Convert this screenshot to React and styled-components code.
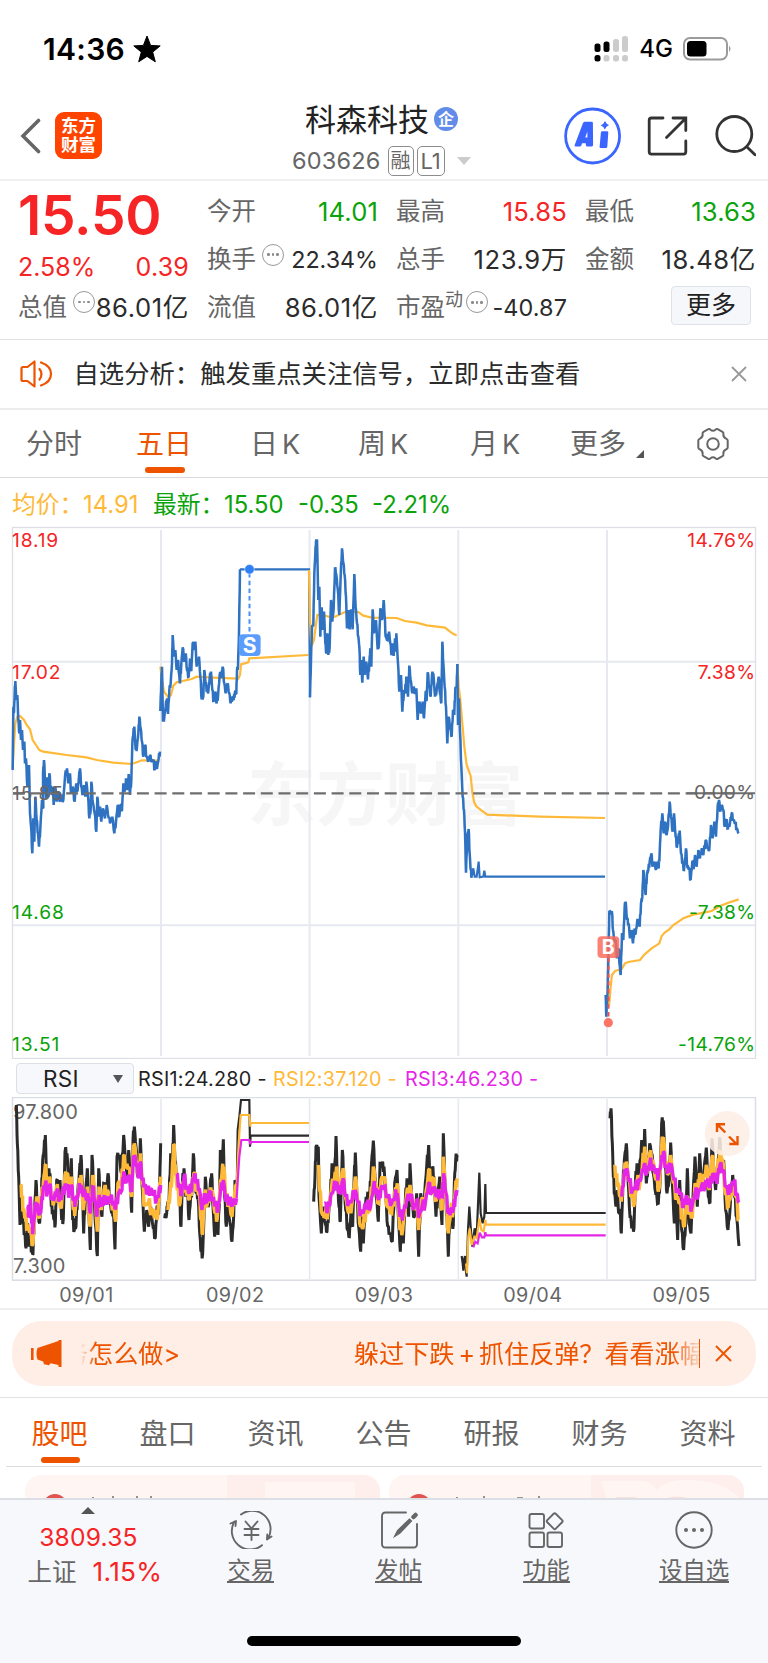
import React from "react";
import styled, { createGlobalStyle, css } from "styled-components";

const C = {
  red: "#f62424",
  green: "#0aa30a",
  orange: "#ee5400",
  amber: "#ffb938",
  magenta: "#e526e8",
  blue: "#2f72c2",
  ink: "#2b2b2b",
  grey: "#666666",
  grid: "#e6e9f0",
};

const GlobalStyle = createGlobalStyle`
  *, *::before, *::after { box-sizing: border-box; }
  body { margin: 0; background: #fff; }
`;

const num = css`
  font-family: Inter, "Noto Sans CJK SC", sans-serif;
`;

const Screen = styled.main`
  width: 768px;
  height: 1663px;
  overflow: hidden;
  display: flex;
  flex-direction: column;
  background: #fff;
  color: ${C.ink};
  ${num}
  svg { display: block; flex: none; }
`;

const Label = styled.span`
  display: block;
  white-space: nowrap;
  flex: none;
  color: ${(p) => p.$c || "inherit"};
  font-size: ${(p) => p.$s}px;
  font-weight: ${(p) => p.$w || 400};
  letter-spacing: ${(p) => p.$ls || 0}px;
  line-height: ${(p) => p.$lh || 30}px;
`;

/* ---------- status bar ---------- */
const StatusBar = styled.div`
  height: 98px;
  padding: 0 36px 0 43px;
  display: flex;
  align-items: center;
  color: #000;
`;
const StatusGroup = styled.div`
  display: flex;
  align-items: center;
  gap: ${(p) => p.$gap}px;
`;
const Grow = styled.div`
  flex: 1;
`;

/* ---------- header ---------- */
const Header = styled.header`
  height: 83px;
  padding: 0 12px 0 20px;
  display: flex;
  align-items: flex-start;
  border-bottom: 2px solid #efeff1;
`;
const Back = styled.div`
  padding-top: 20px;
  width: 35px;
`;
const Logo = styled.div`
  margin-top: 14px;
  width: 47px;
  height: 47px;
  border-radius: 9px;
  background: #ff4400;
  color: #fff;
  display: flex;
  flex-direction: column;
  align-items: center;
  justify-content: center;
`;
const TitleBlock = styled.div`
  margin-left: 190px;
  width: 190px;
`;
const TitleRow = styled.div`
  display: flex;
  align-items: center;
  height: 44px;
  padding-left: 13px;
`;
const CorpBadge = styled.span`
  margin: 0 0 1px 5px;
  width: 24px;
  height: 24px;
  border-radius: 50%;
  background: #628cea;
  color: #fff;
  display: flex;
  align-items: center;
  justify-content: center;
`;
const CodeRow = styled.div`
  display: flex;
  align-items: center;
  height: 38px;
`;
const Tag = styled.span`
  height: 30px;
  width: ${(p) => p.$w}px;
  margin-left: ${(p) => p.$ml}px;
  border: 1.5px solid #8c8c8c;
  border-radius: 5px;
  color: ${C.grey};
  display: flex;
  align-items: center;
  justify-content: center;
`;
const Caret = styled.i`
  margin-left: 12px;
  border: 7px solid transparent;
  border-top: 8px solid #ccc;
  border-bottom: 0;
`;
const HeaderIcons = styled.div`
  flex: 1;
  display: flex;
  justify-content: flex-end;
  padding-top: 9px;
`;

/* ---------- quote ---------- */
const Quote = styled.section`
  height: 159px;
  padding: 0 12px 0 18px;
  display: grid;
  grid-template-columns: repeat(4, 171px);
  column-gap: 18px;
  border-bottom: 1px solid #e2e2e2;
`;
const QuoteCol = styled.div`
  display: flex;
  flex-direction: column;
  padding-top: 6.5px;
`;
const Pair = styled.div`
  height: ${(p) => p.$h || 47.8}px;
  display: flex;
  justify-content: space-between;
  align-items: flex-start;
`;
const Name = styled.span`
  display: flex;
  align-items: flex-start;
`;
const BigPrice = styled.div`
  height: 62px;
  padding-top: 1px;
  font-size: 55px;
  font-weight: 600;
  line-height: 55px;
  letter-spacing: -0.2px;
  color: ${C.red};
`;
const Info = styled.i`
  width: 22px;
  height: 22px;
  margin: 8.5px 0 0 ${(p) => p.$ml}px;
  border: 1.7px solid #999;
  border-radius: 50%;
  display: flex;
  align-items: center;
  justify-content: center;
  gap: 2px;
  &::before, &::after, b { content: ""; width: 2.6px; height: 2.6px; border-radius: 50%; background: #8a8a8a; }
`;
const MoreButton = styled.button`
  ${num}
  align-self: flex-end;
  width: 80px;
  height: 39px;
  margin: 3px 5px 0 0;
  padding: 0;
  border: 1.5px solid #dfe2e8;
  border-radius: 4px;
  background: #f6f7fa;
  color: #222;
  font-size: 25px;
  line-height: 35px;
`;

/* ---------- notice ---------- */
const Notice = styled.section`
  height: 70px;
  padding: 0 21px 0 20px;
  display: flex;
  align-items: center;
  border-bottom: 2px solid #ededef;
`;
const NoticeText = styled(Label)`
  margin-left: 20.5px;
`;

/* ---------- period tabs ---------- */
const PeriodTabs = styled.nav`
  height: 69px;
  display: flex;
  border-bottom: 1.5px solid #dadade;
`;
const Period = styled.div`
  width: ${(p) => p.$w}px;
  padding: 15px 0 0 ${(p) => p.$pl || 0}px;
  color: ${(p) => (p.$on ? C.orange : C.grey)};
  &::after {
    content: "";
    display: ${(p) => (p.$on ? "block" : "none")};
    width: 40px;
    height: 6px;
    margin: 4px 0 0 9px;
    border-radius: 3px;
    background: ${C.orange};
  }
`;
const PeriodRow = styled.div`
  display: flex;
`;
const Corner = styled.i`
  height: 8px;
  margin: 25px 0 0 10px;
  border-left: 8px solid transparent;
  border-bottom: 8px solid #555;
`;
const KLetter = styled.span`
  margin-left: 4px;
  font-size: 27px;
`;

/* ---------- charts ---------- */
const Legend = styled.div`
  height: 48px;
  padding: 10.5px 0 0 12px;
  display: flex;
`;
const LegendItem = styled.span`
  width: ${(p) => p.$w}px;
  color: ${(p) => p.$c};
  font-size: 23.8px;
  line-height: 32px;
  white-space: nowrap;
`;
const PriceChart = styled.svg`
  width: 768px;
  height: 533px;
`;
const RsiBar = styled.div`
  height: 38px;
  padding: 1px 0 0 16px;
  display: flex;
  align-items: center;
`;
const Picker = styled.div`
  width: 118px;
  height: 31px;
  margin-right: 4px;
  padding-left: 26px;
  display: flex;
  align-items: center;
  border: 1.5px solid #dcdfe6;
  border-radius: 4px;
  background: #f7f8fb;
  color: #222;
`;
const PickerCaret = styled.i`
  margin-left: 34px;
  border: 5px solid transparent;
  border-top: 8px solid #555;
  border-bottom: 0;
`;
const RsiItem = styled(LegendItem)`
  font-size: 19.8px;
  letter-spacing: 0.25px;
`;
const RsiChart = styled.svg`
  width: 768px;
  height: 184px;
`;
const Dates = styled.div`
  height: 29px;
  padding: 0 12px;
  display: grid;
  grid-template-columns: repeat(5, 1fr);
  text-align: center;
  border-bottom: 2px solid #efeff1;
`;

/* ---------- promo banner ---------- */
const BannerWrap = styled.section`
  height: 88px;
  padding: 11px 12px 0;
  border-bottom: 1px solid #e2e2e2;
`;
const Banner = styled.div`
  height: 65px;
  border-radius: 30px;
  background: #feeee6;
  color: ${C.orange};
  display: flex;
  align-items: center;
  padding: 0 24px 0 19px;
`;
const Marquee = styled.div`
  width: 618px;
  margin-left: 19px;
  overflow: hidden;
  display: flex;
  mask-image: linear-gradient(90deg, transparent 0, #000 14px, #000 592px, transparent 622px);
  & > :first-child { margin-left: -18px; }
`;
const PromoText = styled(Label)`
  margin-left: 174px;
`;
const Plus = styled.span`
  margin: 0 4px;
`;
const Bar = styled.i`
  width: 1.5px;
  height: 29px;
  background: ${C.orange};
  margin-right: 15px;
`;

/* ---------- content tabs ---------- */
const Sections = styled.nav`
  height: 69px;
  margin: 0 6px;
  padding: 15px 0 0 25.5px;
  display: grid;
  grid-template-columns: repeat(7, 108px);
  border-bottom: 1px solid #dedede;
`;
const SectionTab = styled.div`
  color: ${(p) => (p.$on ? C.orange : C.grey)};
  &::after {
    content: "";
    display: ${(p) => (p.$on ? "block" : "none")};
    width: 39px;
    height: 6px;
    margin: 2px 0 0 9px;
    border-radius: 3px;
    background: ${C.orange};
  }
`;
const Cards = styled.section`
  height: 31px;
  padding: 8px 24px 0 25px;
  display: flex;
  gap: 9px;
`;
const Card = styled.div`
  flex: 1;
  height: 23px;
  border-radius: 16px 16px 0 0;
  overflow: hidden;
  background: linear-gradient(90deg, #fff5f2 0 57%, #ffefec 57% 100%);
`;

/* ---------- bottom bar ---------- */
const BottomBar = styled.footer`
  height: 165px;
  border-top: 2px solid #dcdfe5;
  background: #f7f8fb;
  display: flex;
  flex-direction: column;
`;
const Actions = styled.div`
  height: 136px;
  display: flex;
`;
const IndexBox = styled.div`
  width: 177px;
  display: flex;
  flex-direction: column;
  align-items: center;
  padding-top: 7px;
`;
const UpMark = styled.i`
  border: 7px solid transparent;
  border-bottom: 7px solid #555;
  border-top: 0;
`;
const Inline = styled.div`
  display: flex;
  margin-left: 13px;
`;
const IndexChange = styled(Label)`
  margin-left: 16px;
`;
const Action = styled.div`
  width: 147.8px;
  padding-top: 11px;
  display: flex;
  flex-direction: column;
  align-items: center;
  color: ${C.grey};
`;
const Underlined = styled(Label)`
  margin-top: 5px;
  height: 29px;
  border-bottom: 2px solid ${C.grey};
`;
const HomeIndicator = styled.div`
  align-self: center;
  width: 274px;
  height: 10px;
  border-radius: 5px;
  background: #000;
`;

/* ---------- series data ---------- */
const parse = (s) => s.trim().split(/\s+/).map((p) => p.split(",").map(Number));

const PRICE = [
  {
    x: 0, y: 0,
    price: "38,750 40,565 42,575 44,520 46,483 49,540 52,525 55,600 58,640 60,600 63,660 66,630 69,690 73,665 75,730 78,715 82,800 87,735 90,880 93,918 97,1000 100,895 103,965 106,830 110,900 114,940 117,980 121,925 126,840 130,865 129,760 132,720 136,800 139,835 141,772 146,830 148,760 152,800 156,825 159,800 161,855 166,800 170,845 175,815 180,845 184,830 190,840 195,770 201,745 205,790 210,760 213,820 218,800 224,845 228,795 233,810 237,770 240,745 244,800 248,825 252,795 256,830 259,785 264,830 268,895 272,870 274,785 279,850 284,880 289,935 292,830 297,890 300,860 304,905 309,865 315,895 320,855 326,895 332,905 337,890 343,940 348,905 353,855 358,890 362,855 366,870 370,790 374,815 378,775 382,810 386,762 390,825 394,780 397,670 400,640 403,620 407,690 411,680 415,640 418,590 422,625 426,665 430,710 435,675 440,710 445,725 450,705 455,725 460,720 464,750 468,730 472,740 476,715 480,695",
    avg: "38,745 42,670 46,610 52,590 60,588 72,600 80,615 90,628 98,660 108,675 118,690 130,695 200,705 260,712 290,720 340,728 395,732 415,725 425,721 475,722",
  },
  {
    x: 0, y: 0,
    price: "481,573 484,480 486,440 489,605 493,590 497,560 501,535 504,582 508,510 512,490 516,430 518,345 522,410 526,390 530,450 534,420 537,460 540,490 544,430 548,382 553,425 557,400 561,450 566,470 570,420 574,450 578,370 583,385 586,365 590,440 597,410 601,470 605,538 610,530 613,450 617,490 621,510 625,515 629,475 633,455 637,510 641,545 646,515 650,550 654,530 659,465 664,465 668,440 673,490 677,520 682,490 688,520 692,550 697,530 701,540 705,515 709,520 711,450 714,440 717,340 720,148",
    flat: "720,148 927,148 928,300 930,532",
    avg: "481,440 486,480 492,515 505,532 513,525 520,497 530,487 575,477 590,470 640,473 715,476 720,465 723,433 745,427 748,415 925,405",
  },
  {
    x: 900, y: 0,
    price: "30,532 33,420 36,320 40,315 43,160 46,100 48,65 51,58 55,240 58,200 61,350 65,262 69,330 72,275 76,370 79,400 82,340 85,405 89,380 93,240 97,305 101,265 105,145 109,165 113,205 118,285 122,170 126,85 130,130 134,165 138,230 141,325 145,270 149,328 153,268 158,328 163,162 167,260 171,310 175,350 178,380 181,465 184,420 187,488 191,410 194,465 199,425 204,478 208,430 211,385 214,440 218,268 222,340 228,300 233,388 237,370 241,265 246,300 251,240 254,290 257,350 262,360 267,335 271,370 275,405 279,370 281,408 285,355 288,395 289,340 294,430 298,515 303,465 307,575 312,510 315,520 319,470 324,530 328,437 332,480 337,520 341,500 345,522 349,505 353,600 358,545 363,580 368,545 372,595 377,515 380,540 383,457 388,500 392,530 396,465 400,460 405,530 410,510 416,470 420,520 424,550 427,365 430,430 434,500 438,560 442,670 446,590 451,625 455,650 459,570 463,580 466,505 470,500 472,432",
    avg: "27,150 30,300 34,380 42,360 47,320 52,285 65,283 85,290 105,290 120,283 135,276 175,276 190,287 215,293 290,294 315,303 350,308 380,316 435,323 450,335 462,343 470,346",
  },
  {
    x: 900, y: 0,
    price: "472,432 474,615 477,535 480,635 484,740 488,830 492,870 495,935 498,1058 502,950 506,927 509,1000 512,1050 515,1070",
    flat: "515,1070 520,1045 524,1070 530,1070 536,1025 539,1072 550,1070 553,1052 556,1070 915,1070",
    avg: "472,432 476,500 480,530 487,610 493,680 500,735 512,768 517,815 522,845 528,858 545,872 562,884 720,890 915,894",
  },
  {
    x: 1320, y: 360,
    price: "497,1065 499,1130 503,1050 505,960 508,815 516,818 519,870 523,905 527,900 531,955 536,925 539,975 542,1005 546,880 550,900 554,800 557,785 561,840 566,850 570,895 575,870 579,910 583,870 587,880 591,850 595,840 599,860 603,790 607,770 610,690 614,730 617,765 621,700 625,690 629,665 634,640 638,680 643,665 648,690 652,665 656,685 659,640 662,570 667,520 671,580 675,545 680,585 684,560 689,485 693,530 698,575 702,520 707,590 711,620 715,600 719,572 723,640 728,670 732,690 738,625 742,680 747,685 752,720 757,665 761,685 765,645 770,680 775,630 780,655 785,625 790,645 797,600 803,625 808,630 813,555 818,595 823,545 828,590 833,500 837,480 841,515 845,495 850,510 854,560 859,540 864,565 870,550 875,520 880,540 886,550 890,565 896,580",
    avg: "497,1065 503,1100 508,1090 512,1040 516,1005 525,993 545,987 555,970 565,966 600,960 612,945 620,938 635,925 658,910 665,888 675,877 688,868 700,855 720,842 730,835 760,824 780,820 815,813 840,798 865,788 896,778",
  },
];

const RSI = [
  {
    x: 0,
    r1: "49,165 52,280 56,380 60,525 65,440 69,520 74,550 78,595 83,520 86,590 91,560 95,605 99,612 103,500 108,390 112,470 119,520 124,440 128,330 132,300 136,255 140,390 145,365 150,370 154,470 158,480 162,510 166,520 170,390 175,415 180,390 185,510 190,505 195,305 201,310 206,395 210,400 214,325 218,510 223,540 228,530 233,430 238,370 243,315 247,400 251,550 256,440 262,355 267,500 271,600 276,315 281,400 286,520 292,618 296,355 301,460 306,500 311,400 317,430 324,370 329,440 335,490 340,480 345,598 351,320 358,315 364,370 371,255 376,320 382,380 386,300 391,400 395,488 399,270 403,230 408,290 413,380 417,370 421,265 426,400 433,545 440,480 446,530 452,470 459,530 466,563 471,470 476,490 479,400 482,280",
    r2: "62,405 66,440 70,480 76,500 82,530 90,540 99,580 104,500 110,440 118,505 124,450 130,400 136,345 141,400 148,380 154,440 162,455 170,410 176,450 184,475 195,375 201,370 208,420 214,380 220,480 226,475 236,420 243,375 250,480 262,410 270,530 278,380 285,440 292,545 297,410 304,480 312,420 322,420 330,460 340,460 347,515 354,400 364,400 371,318 378,350 386,350 395,440 399,320 403,280 410,340 417,370 421,310 427,400 434,465 445,460 455,480 466,500 474,490 478,420 482,380",
    r3: "82,470 87,500 91,440 95,520 99,540 105,480 111,460 118,495 124,470 129,420 136,400 142,430 149,405 155,445 163,445 171,420 178,450 186,440 195,405 201,415 208,430 214,405 221,450 226,460 236,425 243,405 250,440 263,430 271,490 278,410 285,450 291,500 297,435 304,470 312,440 322,460 332,440 340,460 347,475 355,430 366,420 371,365 378,400 386,375 395,425 399,345 404,315 410,350 417,375 421,335 427,390 434,405 442,430 452,415 460,435 470,445 476,435 482,405",
  },
  {
    x: 0,
    r1: "494,505 500,490 503,460 507,455 512,310 517,340 521,225 525,330 530,380 535,400 539,460 543,530 547,400 552,355 557,440 562,420 567,510 572,440 576,420 580,310 585,400 589,430 594,440 600,560 603,605 608,612 612,500 616,380 621,450 626,465 631,400 635,370 639,470 644,560 650,480 654,555 659,420 661,300 665,340 670,268 674,440 679,530 684,440 690,520 696,575 701,500 705,390 710,430",
    f1: "710,430 713,240 718,200 723,150 748,150 750,290 752,257 927,257",
    r2: "504,480 510,430 516,380 521,283 526,350 532,420 540,460 548,400 555,420 562,420 568,450 576,400 582,370 590,420 598,430 603,510 608,550 614,430 622,460 630,440 637,420 645,490 652,505 660,410 666,370 672,350 678,450 686,450 696,500 704,430 710,400",
    f2: "710,400 716,280 722,195 748,195 751,230 752,219 927,219",
    r3: "530,370 537,410 545,430 552,380 560,410 568,430 576,400 583,375 590,395 598,415 606,480 613,430 620,460 630,425 638,450 646,460 654,480 661,430 670,390 678,455 688,445 698,465 710,445",
    f3: "710,445 714,380 718,320 724,270 748,270 751,283 753,276 927,276",
  },
  {
    x: 0,
    r1: "941,455 945,380 948,290 955,290 957,440 964,550 970,470 976,520 981,545 986,490 991,440 996,340 1003,400 1008,258 1012,380 1017,470 1021,515 1027,300 1032,400 1037,480 1043,540 1048,560 1053,480 1058,530 1062,400 1066,308 1071,440 1076,530 1082,605 1086,500 1090,580 1096,470 1103,430 1109,440 1114,350 1120,272 1125,380 1130,450 1135,515 1140,340 1146,350 1152,350 1157,440 1163,530 1169,550 1177,575 1184,400 1191,360 1196,520 1201,605 1206,500 1210,580 1216,450 1221,385 1226,500 1230,340 1236,470 1243,500 1250,430 1256,620 1262,430 1268,480 1274,430 1280,350 1286,285 1291,430 1297,355 1302,380 1308,500 1313,440 1319,380 1326,525 1330,250 1336,430 1341,500 1345,620 1350,480 1355,520 1360,525 1363,400 1367,330 1371,315",
    r2: "955,345 959,420 966,490 975,500 985,480 995,410 1002,400 1010,350 1017,430 1025,380 1029,355 1036,440 1046,490 1056,460 1066,380 1073,450 1082,530 1090,530 1098,480 1110,480 1120,350 1128,410 1136,460 1143,390 1152,380 1162,470 1175,490 1184,430 1192,400 1200,540 1208,540 1218,450 1230,405 1240,480 1250,450 1256,540 1264,450 1274,470 1286,360 1294,410 1300,385 1309,450 1319,420 1326,480 1330,320 1337,430 1345,550 1352,480 1360,480 1366,420 1371,385",
    r3: "975,460 983,485 992,440 1000,420 1010,395 1017,430 1025,410 1029,385 1037,440 1046,460 1056,450 1066,420 1074,460 1083,490 1092,480 1100,460 1112,470 1120,410 1128,415 1136,450 1143,415 1152,410 1162,440 1175,460 1185,440 1192,430 1200,500 1210,490 1220,450 1232,435 1242,475 1250,450 1257,500 1266,470 1276,460 1286,400 1294,430 1302,410 1310,440 1320,425 1327,440 1331,370 1338,430 1345,490 1353,480 1360,480 1366,440 1371,420",
  },
  {
    x: 1140,
    f1: "245,618 248,640 250,662 253,625 255,618 258,665 260,680 264,540 268,470 272,530 277,590 284,535 290,560 295,440 298,368 302,490 308,520 313,500 316,402 318,489 677,489",
    f2: "258,640 261,670 265,560 269,535 275,585 283,560 290,565 298,505 304,540 311,545 316,510 318,524 677,524",
    f3: "280,592 286,575 293,580 299,548 306,562 313,562 316,547 318,556 677,556",
  },
  {
    x: 1140,
    r1: "690,205 693,175 697,280 700,380 704,430 708,470 712,420 716,490 720,480 724,550 729,400 733,330 739,280 744,390 750,500 757,530 762,535 766,400 771,340 777,390 785,270 790,340 794,237 799,400 804,360 809,280 815,310 820,370 827,430 835,460 840,400 845,220 850,212 856,350 861,430 867,390 872,278 877,400 883,520 888,450 893,570 899,390 905,540 911,600 917,520 922,355 927,520 933,550 939,440 945,320 952,470 959,310 965,420 972,360 979,293 985,440 990,460 996,265 1002,360 1007,420 1013,370 1019,262 1024,350 1031,330 1037,480 1044,540 1050,480 1058,375 1064,440 1070,500 1077,588",
    r2: "703,350 708,380 714,400 720,440 726,430 733,370 739,335 746,390 755,440 763,460 771,395 780,400 787,350 794,290 801,370 809,310 818,330 828,390 838,410 845,290 850,262 857,340 865,370 872,315 880,400 890,440 900,460 906,500 913,530 920,440 928,490 937,500 945,400 953,430 959,370 968,410 979,345 988,420 996,320 1004,370 1012,370 1019,305 1028,330 1036,430 1045,470 1052,430 1060,410 1068,440 1077,510",
    r3: "725,440 732,380 740,355 748,395 757,420 766,410 775,400 784,380 792,345 800,370 809,340 818,345 828,370 836,375 843,340 850,305 857,350 865,365 873,340 882,390 892,420 902,430 910,470 918,440 926,460 936,470 945,430 955,430 964,410 975,410 983,390 990,410 998,370 1006,390 1013,380 1020,345 1029,360 1038,410 1047,430 1055,400 1062,395 1070,430 1077,458",
  },
];

/* Adds minute-level chatter between the sampled points. */
const chatter = (s, amp) => {
  const pts = parse(s);
  const out = [];
  pts.forEach(([x, y], i) => {
    out.push(`${x},${y}`);
    const n = pts[i + 1];
    if (!n) return;
    const k = amp * (0.6 + 0.4 * Math.sin(i * 2.7));
    out.push(`${x + (n[0] - x) * 0.35},${y + (n[1] - y) * 0.35 - k}`);
    out.push(`${x + (n[0] - x) * 0.68},${y + (n[1] - y) * 0.68 + k}`);
  });
  return out.join(" ");
};

const Line = ({ pts, c, w }) =>
  pts ? <polyline points={pts} fill="none" stroke={c} strokeWidth={w} strokeLinejoin="miter" strokeMiterlimit="2" /> : null;

const AxisText = ({ x, y, c, end, children }) => (
  <text x={x} y={y} fill={c} textAnchor={end ? "end" : "start"} fontSize="19.2" letterSpacing={end ? 0.35 : 0.85} fontFamily="Inter, sans-serif">
    {children}
  </text>
);

const DAY_LINES = [161, 309.6, 458.3, 607];

const Price = () => (
  <PriceChart viewBox="0 526 768 533">
    <text x="247" y="820" fontSize="69" fontWeight="700" fill="#f6f6f6" fontFamily='"Noto Sans CJK SC", sans-serif'>东方财富</text>
    <rect x="12.5" y="527.5" width="743" height="531" fill="none" stroke="#dcdfe5" strokeWidth="1.3" />
    <g stroke={C.grid} strokeWidth="2">
      {DAY_LINES.map((x) => <line key={x} x1={x} x2={x} y1="530" y2="1056" />)}
      <line x1="13" x2="755" y1="661.8" y2="661.8" />
      <line x1="13" x2="755" y1="925.3" y2="925.3" />
    </g>
    <g transform="translate(0 520) scale(0.33333)">
      {PRICE.map((d, i) => (
        <g key={i} transform={`translate(${d.x} ${d.y})`}>
          <Line pts={d.avg} c={C.amber} w="6.6" />
          <Line pts={chatter(d.price, 10)} c={C.blue} w="7.6" />
          <Line pts={d.flat} c={C.blue} w="6.4" />
        </g>
      ))}
    </g>
    <line x1="13" x2="736" y1="793.3" y2="793.3" stroke="#6e6e6e" strokeWidth="2.3" strokeDasharray="12 5.7" />
    <line x1="13" x2="24" y1="793.3" y2="793.3" stroke="#6e6e6e" strokeWidth="2.3" />
    <line x1="687" x2="755" y1="793.3" y2="793.3" stroke="#6e6e6e" strokeWidth="2" />
    <AxisText x="12" y="546.7" c={C.red}>18.19</AxisText>
    <AxisText x="12" y="679" c={C.red}>17.02</AxisText>
    <AxisText x="12" y="799.7" c={C.grey}>15.85</AxisText>
    <AxisText x="12" y="918.7" c={C.green}>14.68</AxisText>
    <AxisText x="12" y="1051" c={C.green}>13.51</AxisText>
    <AxisText x="755.5" y="546.7" c={C.red} end>14.76%</AxisText>
    <AxisText x="755.5" y="679" c={C.red} end>7.38%</AxisText>
    <AxisText x="755.5" y="799.2" c={C.grey} end>0.00%</AxisText>
    <AxisText x="755.5" y="918.7" c={C.green} end>-7.38%</AxisText>
    <AxisText x="755.5" y="1051" c={C.green} end>-14.76%</AxisText>
    <line x1="249.5" x2="249.5" y1="573" y2="634" stroke="#4a90f5" strokeWidth="2" strokeDasharray="4.5 3.2" />
    <circle cx="249.5" cy="569.3" r="4.8" fill="#2f80f5" stroke="#fff" strokeOpacity=".5" strokeWidth="1" />
    <rect x="238.8" y="634.3" width="21.8" height="21.8" rx="4" fill="#5c9dfb" />
    <text x="249.7" y="652.7" fontSize="21" fontWeight="700" fill="#fff" textAnchor="middle" fontFamily="Inter, sans-serif">S</text>
    <line x1="608.5" x2="608.5" y1="958" y2="1020" stroke="#f0504a" strokeWidth="2" strokeDasharray="4.5 3.2" />
    <circle cx="608.3" cy="1022.7" r="4.6" fill="#fc7466" />
    <rect x="597.5" y="936.3" width="21.8" height="21.8" rx="4" fill="#fb6a5c" fillOpacity=".84" />
    <text x="608.3" y="954.2" fontSize="19.5" fontWeight="700" fill="#fff" textAnchor="middle" fontFamily="Inter, sans-serif">B</text>
  </PriceChart>
);

const Rsi = () => (
  <RsiChart viewBox="0 1097 768 184">
    <rect x="12.5" y="1097.5" width="743" height="182.7" fill="none" stroke="#dadde4" strokeWidth="1.5" />
    <g stroke={C.grid} strokeWidth="1.6">
      {DAY_LINES.map((x) => <line key={x} x1={x} x2={x} y1="1099" y2="1279" />)}
    </g>
    <text x="13" y="1119" fontSize="20" letterSpacing=".2" fill={C.grey} fontFamily="Inter, sans-serif">97.800</text>
    <text x="13" y="1272.5" fontSize="20" letterSpacing=".2" fill={C.grey} fontFamily="Inter, sans-serif">7.300</text>
    <g transform="translate(0 1050) scale(0.33333)">
      {RSI.map((d, i) => (
        <g key={i} transform={`translate(${d.x} 0)`}>
          {d.r1 && <Line pts={chatter(d.r1, 16)} c="#2b2b2b" w="9" />}
          <Line pts={d.f1} c="#2b2b2b" w="6.5" />
          {d.r2 && <Line pts={chatter(d.r2, 22)} c={C.amber} w="10.5" />}
          <Line pts={d.f2} c={C.amber} w="6.5" />
          {d.r3 && <Line pts={chatter(d.r3, 19)} c={C.magenta} w="10" />}
          <Line pts={d.f3} c={C.magenta} w="6.5" />
        </g>
      ))}
    </g>
    <circle cx="727.3" cy="1133.7" r="22.6" fill="#fdeee6" fillOpacity=".88" />
    <g fill="none" stroke={C.orange} strokeWidth="2.4">
      <path d="M717 1132v-7.8h8M717.5 1124.7l7.8 7.8" />
      <path d="M737.5 1136v8h-8.2M729 1136.5l8 8" />
    </g>
  </RsiChart>
);

const Stat = ({ name, extra, value, c, s = 25.6, ls = 0.15 }) => (
  <Pair>
    <Name>
      <Label $s={24.5} $c={C.grey} $lh={49}>{name}</Label>
      {extra}
    </Name>
    <Label $s={s} $c={c || C.ink} $lh={49} $ls={ls}>{value}</Label>
  </Pair>
);

export default function App() {
  return (
    <Screen>
      <GlobalStyle />
      <StatusBar>
        <StatusGroup $gap={7}>
          <Label $s={30} $w={600} $lh={32} $ls={0.3}>14:36</Label>
          <svg width="30" height="28" viewBox="0 0 30 28"><path d="M15 1l3.600 9.400 9.600.5-7.500 6.200 2.600 9.700L15 21.400l-8.300 5.400 2.600-9.700-7.500-6.200 9.600-.5z" fill="#000" stroke="#000" strokeLinejoin="round" /></svg>
        </StatusGroup>
        <Grow />
        <StatusGroup $gap={10}>
          <svg width="35" height="26" viewBox="0 0 35 26">
            <rect x="0.5" y="7.5" width="6" height="8.5" rx="2.5" /><rect x="9.5" y="5.5" width="6" height="10.5" rx="2.5" />
            <rect x="19" y="3" width="6" height="13" rx="2.5" fill="#ccc" /><rect x="28" y="0" width="6" height="16" rx="2.5" fill="#ccc" />
            <rect x="0.5" y="19" width="6" height="6.5" rx="2.5" />
            {[9.5, 19, 28].map((x) => <rect key={x} x={x} y="19" width="6" height="6.5" rx="2.5" fill="#ccc" />)}
          </svg>
          <Label $s={24} $w={500} $lh={32}>4G</Label>
          <svg width="49" height="24" viewBox="0 0 49 24">
            <rect x="1" y="1" width="43" height="21.5" rx="6" fill="none" stroke="#9b9b9b" strokeWidth="2" />
            <rect x="4" y="4" width="19.5" height="15.5" rx="3.5" /><path d="M46 8.500q3 3.300 0 6.600z" fill="#9b9b9b" />
          </svg>
        </StatusGroup>
      </StatusBar>

      <Header>
        <Back>
          <svg width="22" height="36" viewBox="0 0 22 36"><path d="M18.500 2.500L3 18l15.500 15.500" fill="none" stroke="#666" strokeWidth="3.6" strokeLinecap="round" /></svg>
        </Back>
        <Logo>
          <Label $s={17.5} $w={700} $lh={19}>东方</Label>
          <Label $s={17.5} $w={700} $lh={19}>财富</Label>
        </Logo>
        <TitleBlock>
          <TitleRow>
            <Label $s={31} $lh={44} $c="#222">科森科技</Label>
            <CorpBadge><Label $s={16} $w={700} $lh={20}>企</Label></CorpBadge>
          </TitleRow>
          <CodeRow>
            <Label $s={23.5} $c={C.grey} $lh={30} $ls={0.2}>603626</Label>
            <Tag $w={26} $ml={7}><Label $s={20} $lh={26}>融</Label></Tag>
            <Tag $w={28} $ml={3}><Label $s={22} $lh={26}>L1</Label></Tag>
            <Caret />
          </CodeRow>
        </TitleBlock>
        <HeaderIcons>
          <svg width="192" height="60" viewBox="564 107 192 60">
            <circle cx="592.6" cy="136" r="27" fill="none" stroke="#3a66ff" strokeWidth="2.8" />
            <g fill="#3a66ff">
              <path fillRule="evenodd" d="M583 123q.6-1.300 2-1.300h6.500q1.400 0 1.400 1.400l.2 22q0 1.400-1.400 1.400h-4.400q-1.300 0-1.400-1.300l-.1-1.900h-3.700l-.8 2.200q-.4 1-1.500 1h-4.100q-1.600 0-1-1.500zM587.300 131.500l-2 6h2.100z" />
              <path d="M602.300 131.300h4.700q1.400 0 1.300 1.300l-1 14.200q-.1 1.300-1.400 1.300h-5q-1.400 0-1.300-1.300l1.300-14.200q.1-1.300 1.400-1.300zM605 121q1.300 3.200 4.100 4.100-3 1.400-4.300 4.500-1-3.200-4.100-4.300 3-1 4.300-4.300z" />
            </g>
            <g fill="none" stroke="#333" strokeWidth="2.8" strokeLinecap="round">
              <path d="M663 118h-11.500q-2.300 0-2.300 2.300v31.500q0 2.300 2.300 2.300h32q2.300 0 2.300-2.300V141M673 118h12.800v12.500M685 119l-18.500 18.500" />
              <circle cx="734.3" cy="134" r="17.5" /><path d="M747 147l8 7.700" />
            </g>
          </svg>
        </HeaderIcons>
      </Header>

      <Quote>
        <QuoteCol>
          <BigPrice>15.50</BigPrice>
          <Pair $h={33.2}>
            <Label $s={25} $c={C.red} $lh={36}>2.58%</Label>
            <Label $s={25} $c={C.red} $lh={36} $ls={0.2}>0.39</Label>
          </Pair>
          <Stat name="总值" extra={<Info $ml={6}><b /></Info>} value="86.01亿" ls={0.6} />
        </QuoteCol>
        <QuoteCol>
          <Stat name="今开" value="14.01" c={C.green} />
          <Stat name="换手" extra={<Info $ml={6}><b /></Info>} value="22.34%" s={23.3} ls={0} />
          <Stat name="流值" value="86.01亿" ls={0.6} />
        </QuoteCol>
        <QuoteCol>
          <Stat name="最高" value="15.85" c={C.red} />
          <Stat name="总手" value="123.9万" ls={0.6} />
          <Stat name="市盈" extra={<><Label $s={18} $c={C.grey} $lh={34}>动</Label><Info $ml={3}><b /></Info></>} value="-40.87" s={23.4} ls={0.1} />
        </QuoteCol>
        <QuoteCol>
          <Stat name="最低" value="13.63" c={C.green} />
          <Stat name="金额" value="18.48亿" ls={0.6} />
          <MoreButton>更多</MoreButton>
        </QuoteCol>
      </Quote>

      <Notice>
        <svg width="33" height="30" viewBox="0 0 33 30" fill="none" stroke={C.orange} strokeWidth="2.2" strokeLinecap="round" strokeLinejoin="round">
          <path d="M14.500 2.500v25l-7-5.500H3q-1.500 0-1.500-1.500v-11Q1.500 8 3 8h4.500zM19.500 10q4 5 0 10.500" />
          <path d="M21 3.500q10 3.500 10 11.500t-10 11.500" />
        </svg>
        <NoticeText $s={25.35} $lh={40}>自选分析：触发重点关注信号，立即点击查看</NoticeText>
        <Grow />
        <svg width="16" height="16" viewBox="0 0 16 16" stroke="#999" strokeWidth="1.8"><path d="M1 1l14 14M15 1L1 15" /></svg>
      </Notice>

      <PeriodTabs>
        <Period $w={136} $pl={26}><Label $s={28} $lh={38}>分时</Label></Period>
        <Period $w={114} $on><Label $s={28} $lh={38}>五日</Label></Period>
        <Period $w={108}><Label $s={28} $lh={38}>日<KLetter>K</KLetter></Label></Period>
        <Period $w={112}><Label $s={28} $lh={38}>周<KLetter>K</KLetter></Label></Period>
        <Period $w={100}><Label $s={28} $lh={38}>月<KLetter>K</KLetter></Label></Period>
        <Period $w={126}>
          <PeriodRow><Label $s={28} $lh={38}>更多</Label><Corner /></PeriodRow>
        </Period>
        <Period>
          <svg width="34" height="38" viewBox="0 -2 34 38" fill="none" stroke="#666" strokeWidth="2">
            <circle cx="17" cy="17" r="5.8" />
            <path strokeLinejoin="round" d="M12.300 2.200q1.200-.6 2.200.5 2.500 2.100 5 0 1-1.100 2.200-.5l4.800 2.600q1.200.7.900 2-.5 3.300 2.700 4.800 1.600.7 1.600 2v6.800q0 1.300-1.600 2-3.200 1.500-2.700 4.800.3 1.300-.9 2l-4.800 2.600q-1.200.6-2.200-.5-2.500-2.100-5 0-1 1.100-2.200.5l-4.800-2.600q-1.200-.7-.9-2 .5-3.300-2.700-4.800-1.600-.7-1.600-2v-6.800q0-1.300 1.600-2 3.200-1.500 2.700-4.800-.3-1.300.9-2z" />
          </svg>
        </Period>
      </PeriodTabs>

      <Legend>
        <LegendItem $w={71} $c={C.amber}>均价：</LegendItem>
        <LegendItem $w={70} $c={C.amber}>14.91</LegendItem>
        <LegendItem $w={71} $c={C.green}>最新：</LegendItem>
        <LegendItem $w={74} $c={C.green}>15.50</LegendItem>
        <LegendItem $w={74} $c={C.green}>-0.35</LegendItem>
        <LegendItem $w={90} $c={C.green}>-2.21%</LegendItem>
      </Legend>
      <Price />
      <RsiBar>
        <Picker><Label $s={22.5} $lh={28} $ls={0.3}>RSI</Label><PickerCaret /></Picker>
        <RsiItem $w={135} $c="#222">RSI1:24.280 -</RsiItem>
        <RsiItem $w={132} $c={C.amber}>RSI2:37.120 -</RsiItem>
        <RsiItem $w={140} $c={C.magenta}>RSI3:46.230 -</RsiItem>
      </RsiBar>
      <Rsi />
      <Dates>
        {["09/01", "09/02", "09/03", "09/04", "09/05"].map((d) => (
          <Label key={d} $s={19.8} $c={C.grey} $lh={28} $ls={0.4}>{d}</Label>
        ))}
      </Dates>

      <BannerWrap>
        <Banner>
          <svg width="31" height="28" viewBox="0 0 31 28" fill={C.orange}>
            <rect x="0" y="8" width="2.6" height="12" /><path d="M6.500 8L27.500 1V0H30.500V27h-3v-2l-8-1.800-1.500 2-5-1-.8-2.700L6.500 19.500Q4.500 13.500 6.500 8z" />
          </svg>
          <Marquee>
            <Label $s={25.1} $lh={36}>务怎么做&gt;</Label>
            <PromoText $s={25.1} $lh={36}>躲过下跌<Plus>+</Plus>抓住反弹？看看涨幅</PromoText>
          </Marquee>
          <Bar />
          <svg width="17" height="17" viewBox="0 0 17 17" stroke={C.orange} strokeWidth="1.9"><path d="M1 1l15 15M16 1L1 16" /></svg>
        </Banner>
      </BannerWrap>

      <Sections>
        {["股吧", "盘口", "资讯", "公告", "研报", "财务", "资料"].map((t, i) => (
          <SectionTab key={t} $on={i === 0}><Label $s={28} $lh={42}>{t}</Label></SectionTab>
        ))}
      </Sections>
      <Cards>
        <Card>
          <svg width="355" height="24" viewBox="25 1475 355 24">
            <path d="M193 1475h34v12h-34zM265 1482h90v17h-90z" fill="#fff6f4" />
            <circle cx="55" cy="1506" r="12" fill="#e0534e" />
            <path d="M93 1497v2M113 1496v3M137 1496v3M151 1496v3" stroke="#777" strokeWidth="1.6" />
          </svg>
        </Card>
        <Card>
          <svg width="355" height="24" viewBox="389 1475 355 24">
            <path d="M601 1481h40q10 0 16 9 8-10 28-10 40 0 55 19H607z" fill="#fff6f4" />
            <path d="M616 1497h20v2h-20zM663 1499q14-5 28 0z" fill="#fde2da" />
            <circle cx="419" cy="1506" r="12" fill="#e0534e" />
            <path d="M457 1497v2M484 1496v3M517 1498h6M539 1496v3" stroke="#777" strokeWidth="1.6" />
          </svg>
        </Card>
      </Cards>

      <BottomBar>
        <Actions>
          <IndexBox>
            <UpMark />
            <Label $s={24.6} $c={C.red} $lh={47} $ls={0.2}>3809.35</Label>
            <Inline>
              <Label $s={24.5} $c={C.grey} $lh={22}>上证</Label>
              <IndexChange $s={26.2} $c={C.red} $lh={22} $ls={0.3}>1.15%</IndexChange>
            </Inline>
          </IndexBox>
          <Action>
            <svg width="44" height="38" viewBox="0 0 44 38" fill="none" stroke="#666" strokeWidth="1.9" strokeLinecap="round" strokeLinejoin="round">
              <path d="M12 3.500A18.400 18.400 0 0 1 39 27.500M38 28.500l4.500-3M38 28.500l.3-5" />
              <path d="M33 34.200A18.400 18.400 0 0 1 5.500 10.500M1.500 12.500l5.500-2.500-.5 5" />
              <path d="M16.500 10.500l6 7 6-7M22.500 17.500v11.500M15.500 18h14M15.500 24h14" />
            </svg>
            <Underlined $s={23.5} $lh={33}>交易</Underlined>
          </Action>
          <Action>
            <svg width="38" height="38" viewBox="0 0 38 38" fill="none" stroke="#666" strokeWidth="1.9" strokeLinecap="round">
              <path d="M26 1.500H5.500q-3.500 0-3.500 3.500v28q0 3.500 3.500 3.500h28q3.500 0 3.500-3.500V13" />
              <path d="M14.500 25.500l3-6L29.500 8l2 2L20 22z" fill="#666" strokeWidth="1.2" /><path d="M33.500 6l2-2" strokeWidth="4.5" />
            </svg>
            <Underlined $s={23.5} $lh={33}>发帖</Underlined>
          </Action>
          <Action>
            <svg width="36" height="38" viewBox="0 0 36 38" fill="none" stroke="#666" strokeWidth="1.9">
              <rect x="1.5" y="3" width="14.5" height="14.5" rx="2" /><rect x="1.5" y="21.5" width="14.5" height="14.5" rx="2" />
              <rect x="19.5" y="21.5" width="14.5" height="14.5" rx="2" /><rect x="20.7" y="4.2" width="12" height="12" rx="1.5" transform="rotate(45 26.7 10.2)" />
            </svg>
            <Underlined $s={23.5} $lh={33}>功能</Underlined>
          </Action>
          <Action>
            <svg width="38" height="38" viewBox="0 0 38 38" fill="#666">
              <circle cx="19" cy="19" r="17.7" fill="none" stroke="#666" strokeWidth="1.9" />
              <circle cx="11" cy="19" r="2" /><circle cx="19" cy="19" r="2" /><circle cx="27" cy="19" r="2" />
            </svg>
            <Underlined $s={23.5} $lh={33}>设自选</Underlined>
          </Action>
        </Actions>
        <HomeIndicator />
      </BottomBar>
    </Screen>
  );
}
